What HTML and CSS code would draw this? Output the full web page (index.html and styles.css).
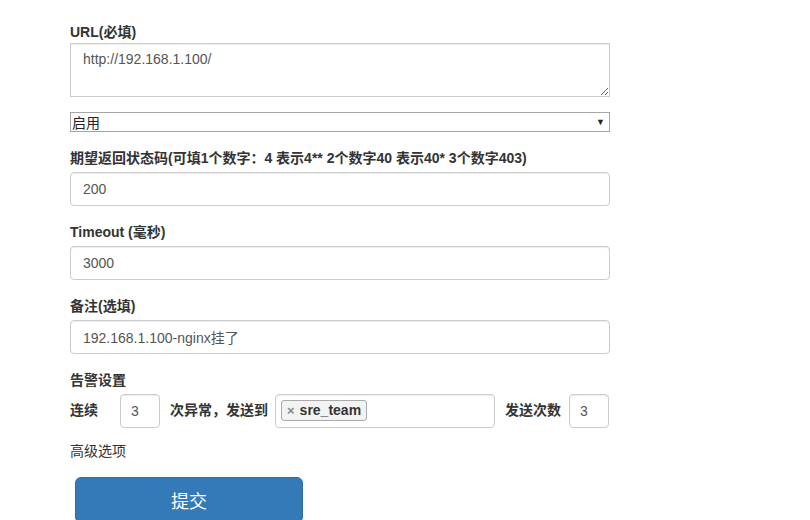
FILE: index.html
```html
<!DOCTYPE html>
<html lang="zh-CN">
<head>
    <meta charset="UTF-8">
    <title>添加监控</title>
    <link rel="stylesheet" href="styles.css">
</head>
<body>
    <form class="container">
        <div class="form-group first">
            <label for="url">URL(必填)</label>
            <textarea id="url" class="form-control url-box">http://192.168.1.100/</textarea>
        </div>

        <div class="select-wrap">
            <select class="plain-select">
                <option>启用</option>
                <option>停用</option>
            </select>
        </div>

        <div class="form-group">
            <label for="code">期望返回状态码(可填1个数字：4 表示4** 2个数字40 表示40* 3个数字403)</label>
            <input type="text" id="code" class="form-control" value="200">
        </div>

        <div class="form-group">
            <label for="timeout">Timeout (毫秒)</label>
            <input type="text" id="timeout" class="form-control" value="3000">
        </div>

        <div class="form-group">
            <label for="note">备注(选填)</label>
            <input type="text" id="note" class="form-control" value="192.168.1.100-nginx挂了">
        </div>

        <div class="form-group alarm">
            <label>告警设置</label>
            <div class="alarm-row">
                <span class="inline-label first-label">连续</span>
                <input type="text" class="form-control small-input" value="3">
                <span class="inline-label">次异常，发送到</span>
                <div class="form-control tag-box">
                    <span class="tag"><span class="tag-x">×</span>sre_team</span>
                </div>
                <span class="inline-label">发送次数</span>
                <input type="text" class="form-control small-input" value="3">
            </div>
        </div>

        <div class="advanced">高级选项</div>

        <button type="submit" class="btn-submit">提交</button>
    </form>
</body>
</html>
```

FILE: styles.css
```css
* {
    margin: 0;
    padding: 0;
    box-sizing: border-box;
}

body {
    background-color: #fff;
    color: #333;
    font-family: "Liberation Sans", "Noto Sans CJK SC", sans-serif;
    font-size: 14px;
    line-height: 1.42857;
}

.container {
    width: 540px;
    margin-left: 70px;
    padding-top: 21px;
}

.form-group {
    margin-bottom: 15px;
}

label {
    display: block;
    font-weight: bold;
    padding-top: 2px;
    margin-bottom: 3px;
}

.form-group.first label {
    margin-bottom: 0;
}

.form-control {
    display: block;
    width: 100%;
    height: 34px;
    padding: 6px 12px;
    font-family: inherit;
    font-size: 14px;
    color: #555;
    background-color: #fff;
    border: 1px solid #ccc;
    border-radius: 4px;
    box-shadow: inset 0 1px 1px rgba(0, 0, 0, 0.075);
}

.url-box {
    height: 54px;
    border-radius: 0;
    resize: vertical;
    line-height: 1.42857;
}

.select-wrap {
    position: relative;
    margin-bottom: 15px;
}

.plain-select {
    display: block;
    width: 100%;
    height: 20px;
    padding: 1px 1px 0;
    font-family: inherit;
    font-size: 14px;
    line-height: 18px;
    color: #222;
    background-color: #fff;
    border: 1px solid #a6a6a6;
    border-radius: 0;
    appearance: none;
    -webkit-appearance: none;
}

.select-wrap::after {
    content: "▼";
    position: absolute;
    right: 5px;
    top: 3px;
    font-size: 9px;
    line-height: 14px;
    color: #222;
    pointer-events: none;
}

.alarm {
    margin-bottom: 13px;
}

.alarm-row {
    display: flex;
    align-items: center;
}

.inline-label {
    font-weight: bold;
    margin: 0 7px 0 10px;
    white-space: nowrap;
}

.first-label {
    margin: 0 22px 0 0;
}

.small-input {
    width: 40px;
    flex: none;
    padding: 6px 10px;
}

.tag-box {
    width: 220px;
    flex: none;
    padding: 5px;
}

.tag {
    display: inline-block;
    height: 21px;
    padding: 0 5px;
    font-weight: bold;
    font-size: 14px;
    line-height: 19px;
    color: #333;
    background-color: #f3f3f3;
    border: 1px solid #aaa;
    border-radius: 3px;
}

.tag-x {
    color: #888;
    font-size: 13px;
    margin-right: 5px;
}

.alarm-row .inline-label:nth-of-type(3) {
    margin: 0 8px 0 10px;
}

.advanced {
    padding-top: 1px;
    margin-bottom: 15px;
}

.btn-submit {
    display: block;
    width: 228px;
    height: 46px;
    margin-left: 5px;
    font-family: inherit;
    font-size: 18px;
    color: #fff;
    background-color: #337ab7;
    border: 1px solid #2e6da4;
    border-radius: 6px;
    cursor: pointer;
}
```
